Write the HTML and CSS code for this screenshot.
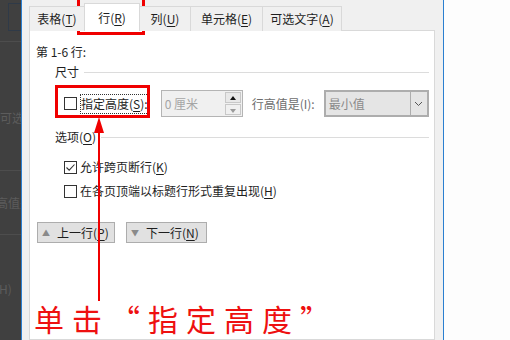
FILE: index.html
```html
<!DOCTYPE html>
<html lang="zh-CN">
<head>
  <meta charset="UTF-8">
  <title>表格属性 - 行</title>
  <link rel="stylesheet" href="styles.css">
</head>
<body>
  <div class="screen">
    <!-- 背后的文档窗口 -->
    <div class="backdrop">
      <div class="bd-box"></div>
      <div class="bd-line l1"></div>
      <span class="bd-text t1">可选</span>
      <div class="bd-line l2"></div>
      <span class="bd-text t2">高值是</span>
      <div class="bd-line l3"></div>
      <span class="bd-text t3">H)</span>
    </div>

    <!-- 表格属性对话框 -->
    <div class="dialog">
      <div class="tabs">
        <div class="tab w1">表格(<u>T</u>)</div>
        <div class="tab selected w2">行(<u>R</u>)</div>
        <div class="tab w3">列(<u>U</u>)</div>
        <div class="tab w4">单元格(<u>E</u>)</div>
        <div class="tab w5">可选文字(<u>A</u>)</div>
      </div>
      <div class="panel">
        <div class="range-title">第 1-6 行:</div>

        <div class="group-head">
          <span>尺寸</span>
          <div class="rule"></div>
        </div>
        <div class="size-row">
          <span class="checkbox"></span>
          <span class="focus-label">指定高度(<u>S</u>):</span>
          <div class="spin">
            <span class="spin-value">0 厘米</span>
            <div class="spin-buttons">
              <span class="spin-btn up"></span>
              <span class="spin-btn down"></span>
            </div>
          </div>
          <span class="muted-label">行高值是(I):</span>
          <div class="select">
            <span class="select-value">最小值</span>
            <span class="select-arrow">
              <svg width="9" height="6" viewBox="0 0 9 6"><path d="M1 1 L4.5 4.5 L8 1" fill="none" stroke="#555" stroke-width="1"/></svg>
            </span>
          </div>
        </div>

        <div class="group-head second">
          <span>选项(<u>O</u>)</span>
          <div class="rule"></div>
        </div>
        <div class="check-row first">
          <span class="checkbox">
            <svg width="11" height="11" viewBox="0 0 11 11"><path d="M1.5 5.5 L4.2 8.2 L9.5 2.5" fill="none" stroke="#333" stroke-width="1.1"/></svg>
          </span>
          <span>允许跨页断行(<u>K</u>)</span>
        </div>
        <div class="check-row">
          <span class="checkbox"></span>
          <span>在各页顶端以标题行形式重复出现(<u>H</u>)</span>
        </div>

        <div class="nav-buttons">
          <button class="nav-btn prev"><span class="tri">▲</span>上一行(<u>P</u>)</button>
          <button class="nav-btn next"><span class="tri">▼</span>下一行(<u>N</u>)</button>
        </div>
      </div>
    </div>

    <div class="outside"></div>

    <!-- 标注 -->
    <div class="mark mark-tab"></div>
    <div class="mark mark-check"></div>
    <div class="arrow">
      <div class="arrow-head"></div>
      <div class="arrow-line"></div>
    </div>
    <div class="note">单击“指定高度”</div>
  </div>
</body>
</html>
```

FILE: styles.css
```css
/* 基本 */
body {
  margin: 0;
  font-family: "Noto Sans CJK SC", "Noto Sans", sans-serif;
  font-size: 12px;
  color: #1e1e1e;
}
u {
  text-decoration-thickness: 1px;
  text-underline-offset: 2px;
}
.screen {
  position: relative;
  width: 510px;
  height: 340px;
  display: flex;
  overflow: hidden;
}

/* 背后窗口 */
.backdrop {
  position: relative;
  width: 21px;
  flex: none;
  background-color: #404040;
  overflow: hidden;
}
.bd-box {
  position: absolute;
  left: 8px;
  top: 3px;
  width: 16px;
  height: 26px;
  border: 1px solid #2f3a48;
}
.bd-line {
  position: absolute;
  left: 0;
  width: 21px;
  height: 1px;
  background-color: #4d4d4d;
}
.bd-line.l1 { top: 41px; }
.bd-line.l2 { top: 170px; }
.bd-line.l3 { top: 234px; }
.bd-text {
  position: absolute;
  white-space: nowrap;
  color: #5c5c5c;
  font-size: 12px;
  line-height: 16px;
}
.bd-text.t1 { left: 0; top: 110px; }
.bd-text.t2 { left: -4px; top: 195px; }
.bd-text.t3 { left: -1px; top: 281px; }

/* 对话框 */
.dialog {
  flex: none;
  display: flex;
  flex-direction: column;
  background-color: #f0f0f0;
  border-left: 1px solid #2b7fd0;
  border-right: 1px solid #2b7fd0;
  padding: 3px 8px 0 7px;
  width: 406px;
}
.outside {
  flex: 1;
  background-color: #fdfdfd;
}

/* 选项卡 */
.tabs {
  display: flex;
  align-items: flex-end;
  height: 28px;
  margin-bottom: -1px;
  position: relative;
  z-index: 1;
}
.tab {
  height: 25px;
  line-height: 24px;
  box-sizing: border-box;
  border: 1px solid #d9d9d9;
  border-bottom: none;
  margin-right: -1px;
  text-align: center;
  color: #1e1e1e;
  background-color: #f0f0f0;
}
.tab.selected {
  height: 28px;
  line-height: 27px;
  background-color: #ffffff;
}
.w1 { width: 56px; }
.w2 { width: 56px; }
.w3 { width: 52px; }
.w4 { width: 73px; }
.w5 { width: 80px; }

/* 面板 */
.panel {
  flex: 1;
  background-color: #ffffff;
  border: 1px solid #d9d9d9;
  padding: 13px 5px 0 6px;
}
.range-title {
  line-height: 16px;
}
.group-head {
  display: flex;
  align-items: center;
  margin: 4px 0 0 19px;
  line-height: 16px;
  gap: 5px;
}
.group-head.second {
  margin-top: 12px;
}
.rule {
  flex: 1;
  height: 1px;
  background-color: #dcdcdc;
}

/* 尺寸行 */
.size-row {
  display: flex;
  align-items: center;
  height: 27px;
  margin: 10px 0 0 28px;
}
.checkbox {
  width: 13px;
  height: 13px;
  flex: none;
  box-sizing: border-box;
  border: 1px solid #333333;
  background-color: #ffffff;
  display: flex;
  align-items: center;
  justify-content: center;
  margin-right: 3px;
}
.focus-label {
  border: 1px dotted #333333;
  padding: 1px 0 1px 0;
  line-height: 16px;
  margin-right: 12px;
}
.spin {
  display: flex;
  width: 82px;
  height: 27px;
  box-sizing: border-box;
  border: 1px solid #b4b4b4;
  background-color: #f0f0f0;
  margin-right: 9px;
}
.spin-value {
  flex: 1;
  color: #a5a5a5;
  line-height: 25px;
  padding-left: 3px;
}
.spin-buttons {
  width: 16px;
  display: flex;
  flex-direction: column;
  gap: 1px;
  padding: 1px 1px 1px 0;
}
.spin-btn {
  flex: 1;
  box-sizing: border-box;
  border: 1px solid #c8c8c8;
  background-color: #f0f0f0;
  position: relative;
}
.spin-btn.up {
  background-color: #e8e8e8;
}
.spin-btn::after {
  content: "";
  position: absolute;
  left: 4px;
  top: 3px;
  border-left: 3px solid transparent;
  border-right: 3px solid transparent;
}
.spin-btn.up::after {
  border-bottom: 4px solid #111111;
}
.spin-btn.down::after {
  border-top: 4px solid #9a9a9a;
  top: 4px;
}
.muted-label {
  color: #6d6d6d;
  width: 72px;
}
.select {
  display: flex;
  width: 105px;
  height: 27px;
  box-sizing: border-box;
  border: 2px solid #adadad;
  background-color: #e5e5e5;
}
.select-value {
  flex: 1;
  color: #8a8a8a;
  line-height: 23px;
  padding-left: 3px;
}
.select-arrow {
  width: 16px;
  border-left: 1px solid #adadad;
  display: flex;
  align-items: center;
  justify-content: center;
}

/* 选项 */
.check-row {
  display: flex;
  align-items: center;
  line-height: 16px;
  margin: 8px 0 0 28px;
}
.check-row.first {
  margin-top: 14px;
}

/* 上一行 / 下一行 */
.nav-buttons {
  display: flex;
  gap: 11px;
  margin: 23px 0 0 1px;
}
.nav-btn {
  height: 21px;
  padding: 0 0 0 4px;
  font-family: inherit;
  font-size: 12px;
  color: #1e1e1e;
  background-color: #e1e1e1;
  border: 1px solid #adadad;
  display: flex;
  align-items: center;
  white-space: nowrap;
}
.nav-btn.prev { width: 78px; }
.nav-btn.next { width: 81px; }
.tri {
  color: #8a8a8a;
  font-size: 8px;
  margin-right: 7px;
}

/* 标注 */
.mark {
  position: absolute;
  border: 3px solid #f00000;
  box-sizing: border-box;
}
.mark-tab {
  left: 77px;
  top: -3px;
  width: 68px;
  height: 38px;
}
.mark-check {
  left: 55px;
  top: 85px;
  width: 95px;
  height: 33px;
}
.arrow {
  position: absolute;
  left: 94px;
  top: 117px;
  width: 10px;
  display: flex;
  flex-direction: column;
  align-items: center;
}
.arrow-head {
  width: 0;
  height: 0;
  border-left: 5px solid transparent;
  border-right: 5px solid transparent;
  border-bottom: 16px solid #f00000;
}
.arrow-line {
  width: 2px;
  height: 168px;
  background-color: #f00000;
}
.note {
  position: absolute;
  left: 34px;
  top: 298px;
  font-size: 30px;
  line-height: 40px;
  letter-spacing: 8px;
  color: #ee1010;
  white-space: nowrap;
}
```
